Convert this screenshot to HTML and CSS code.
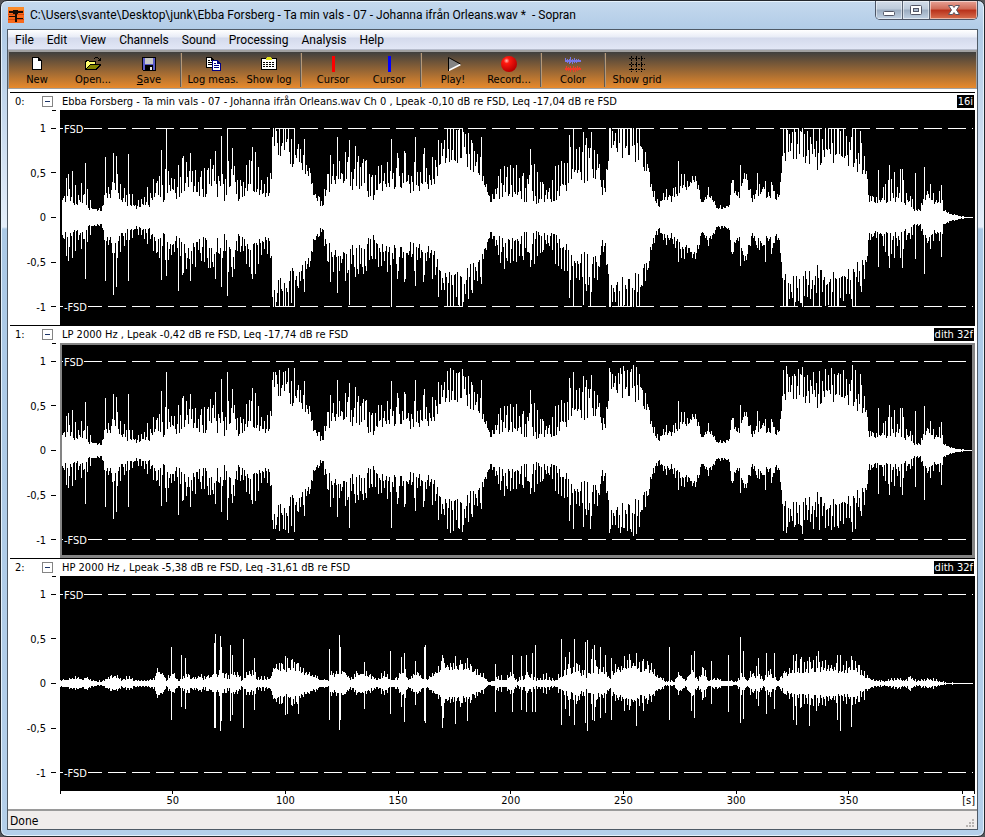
FILE: index.html
```html
<!DOCTYPE html>
<html lang="en">
<head>
  <meta charset="UTF-8">
  <meta name="viewport" content="width=device-width, initial-scale=1.0">
  <title>Sopran</title>
  <link rel="stylesheet" href="styles.css">
</head>
<body>
  <div class="window">
    <header class="titlebar">
      <svg class="app-icon" width="16" height="16" viewBox="0 0 16 16" shape-rendering="crispEdges">
        <rect width="16" height="16" fill="#f9691b"/>
        <rect width="16" height="3" fill="#fb8a28"/>
        <path d="M0 7.500h16M0 12.500h16" stroke="#d8480c"/>
        <path d="M1 4h14v2H1zM5 3h5v4H5zM7 3h2v12H7zM1 9h7v1H1zM9 11h6v1H9z" fill="#1b0d05"/>
      </svg>
      <h1 class="title">C:\Users\svante\Desktop\junk\Ebba Forsberg - Ta min vals - 07 - Johanna ifrån Orleans.wav *&nbsp; - Sopran</h1>
      <div class="window-controls">
        <button class="minimize" aria-label="Minimize">
          <svg width="12" height="14" viewBox="0 0 12 14"><rect x="0.5" y="8.5" width="11" height="4" rx="1" fill="#fff" stroke="#535666"/></svg>
        </button>
        <button class="maximize" aria-label="Maximize">
          <svg width="12" height="14" viewBox="0 0 12 14"><rect x="0.5" y="2.5" width="11" height="9" rx="1" fill="#fff" stroke="#535666"/><rect x="3.5" y="5.5" width="5" height="3" fill="#a9b9cd" stroke="#535666"/></svg>
        </button>
        <button class="close" aria-label="Close">
          <svg width="14" height="14" viewBox="0 0 14 14"><path d="M1.500 2.500h4L7 4.500l1.500-2h4L9.500 7l3 4.500h-4L7 9.500l-1.500 2h-4L4.500 7z" fill="#fff" stroke="#5a5560"/></svg>
        </button>
      </div>
    </header>

    <div class="client">
      <nav class="menu">
        <button>File</button>
        <button>Edit</button>
        <button>View</button>
        <button>Channels</button>
        <button>Sound</button>
        <button>Processing</button>
        <button>Analysis</button>
        <button>Help</button>
      </nav>

      <div class="toolbar">
        <button>
          <svg width="16" height="16" viewBox="0 0 16 16" shape-rendering="crispEdges"><path d="M3 1h7v1h1v1h1v1h1v10H3z" fill="#000"/><path d="M4 2h5v3h3v8H4z" fill="#fff"/></svg>
          New
        </button>
        <button>
          <svg width="16" height="16" viewBox="0 0 16 16" shape-rendering="crispEdges">
            <path d="M0 5h1V4h3v1h7v3h5v1l-5 5H0z" fill="#000"/>
            <path d="M1 6h1V5h2v1h6v2H5l-4 4z" fill="#ffff70"/>
            <path d="M5 9h9l-4 4H2z" fill="#848400"/>
            <path d="M9 2h1V1h3v1h1v1h1V2h1v3h-3V4h1V3h-1V2h-3v1H9z" fill="#000"/>
          </svg>
          Open...
        </button>
        <button>
          <svg width="16" height="16" viewBox="0 0 16 16" shape-rendering="crispEdges">
            <path d="M1 1h14v14H2l-1-1z" fill="#000"/>
            <path d="M2 2h2v6h8V2h2v12h-2V9H4v5H2z" fill="#5a5ac8"/>
            <path d="M4 2h8v6H4z" fill="#c6c6c6"/>
            <path d="M9 11h2v3H9z" fill="#e8e8e8"/>
          </svg>
          <span><u>S</u>ave</span>
        </button>
        <span class="separator"></span>
        <button>
          <svg width="16" height="16" viewBox="0 0 16 16" shape-rendering="crispEdges">
            <path d="M1 1h6v1h1v1h1v9H1z" fill="#000"/><path d="M2 2h4v3h2v6H2z" fill="#fff"/>
            <path d="M3 4.500h2M3 6.500h4M3 8.500h4" stroke="#000"/>
            <path d="M7 4h6v1h1v1h1v1h1v8H7z" fill="#000084"/><path d="M8 5h4v3h3v6H8z" fill="#fff"/>
            <path d="M9 7.500h2M9 9.500h5M9 11.500h5" stroke="#000084"/>
          </svg>
          Log meas.
        </button>
        <button>
          <svg width="16" height="16" viewBox="0 0 16 16" shape-rendering="crispEdges">
            <path d="M0 2h16v12H0z" fill="#000"/><path d="M1 3h14v10H1z" fill="#fff"/>
            <path d="M5 2h1V1h4v1h1v2H5z" fill="#e6e61e"/>
            <path d="M2 6.500h12M2 8.500h12M2 10.500h12" stroke="#000" stroke-dasharray="2 1"/>
          </svg>
          Show log
        </button>
        <span class="separator"></span>
        <button>
          <svg width="16" height="16" viewBox="0 0 16 16" shape-rendering="crispEdges"><path d="M7 0h3v16H7z" fill="#f00"/></svg>
          Cursor
        </button>
        <button>
          <svg width="16" height="16" viewBox="0 0 16 16" shape-rendering="crispEdges"><path d="M7 0h3v16H7z" fill="#00f"/></svg>
          Cursor
        </button>
        <span class="separator"></span>
        <button>
          <svg width="16" height="16" viewBox="0 0 16 16"><path d="M3.500 1.500v13l12-6z" fill="#848484"/><path d="M3.500 14.500l12-6" stroke="#fff" stroke-width="1.500"/><path d="M3.500 15V1.500l12 6.500" fill="none" stroke="#000"/></svg>
          Play!
        </button>
        <button>
          <svg width="16" height="16" viewBox="0 0 16 16">
            <defs><radialGradient id="recordBall" cx="0.35" cy="0.3" r="0.7"><stop offset="0" stop-color="#ffc0b8"/><stop offset="0.25" stop-color="#ff1a10"/><stop offset="1" stop-color="#b80000"/></radialGradient></defs>
            <circle cx="8" cy="8" r="8" fill="url(#recordBall)"/>
          </svg>
          Record...
        </button>
        <span class="separator"></span>
        <button>
          <svg width="16" height="16" viewBox="0 0 16 16" shape-rendering="crispEdges">
            <path d="M0 4h16v2H0zM0 2h1v4H0zM2 3h1v4H2zM4 3h1v5H4zM5 1h1v6H5zM7 3h1v5H7zM9 2h1v5H9zM11 3h1v4h-1zM13 3h1v3h-1z" fill="#7878e8"/>
            <path d="M0 12h16v2H0zM1 10h1v5H1zM3 11h1v4H3zM5 10h1v6H5zM8 10h1v6H8zM10 11h1v5h-1zM12 10h1v5h-1zM14 11h1v3h-1z" fill="#f03c28"/>
          </svg>
          Color
        </button>
        <span class="separator"></span>
        <button>
          <svg width="16" height="16" viewBox="0 0 16 16" shape-rendering="crispEdges"><path d="M0 2.500h16M0 8.500h16M0 13.500h16M2.500 0v16M7.500 0v16M12.500 0v16" stroke="#000" stroke-dasharray="2 1"/></svg>
          Show grid
        </button>
      </div>

      <main class="channels">
        <!-- Channels will be injected here by JavaScript -->
      </main>

      <div class="x-axis">
        <span class="tick"></span>
        <span class="tick">50</span>
        <span class="tick">100</span>
        <span class="tick">150</span>
        <span class="tick">200</span>
        <span class="tick">250</span>
        <span class="tick">300</span>
        <span class="tick">350</span>
        <span class="unit">[s]</span>
      </div>

      <footer class="statusbar">
        <span>Done</span>
        <svg class="grip" width="10" height="10" viewBox="0 0 10 10" shape-rendering="crispEdges"><path d="M7 0h2v2H7zM4 3h2v2H4zM7 3h2v2H7zM1 6h2v2H1zM4 6h2v2H4zM7 6h2v2H7z" fill="#b8b4b2"/></svg>
      </footer>
    </div>
  </div>

  <script src="script.js"></script>
</body>
</html>
```
FILE: styles.css
```css
* {
  box-sizing: border-box;
}

body {
  margin: 0;
  background-color: #55565a;
  font-family: "DejaVu Sans Condensed", Tahoma, sans-serif;
  font-size: 11px;
  line-height: 14px;
  color: #000;
}

button {
  padding: 0;
  border: none;
  background: none;
  font: inherit;
  color: inherit;
}

/* Glass window frame */
.window {
  display: flex;
  flex-direction: column;
  min-height: 100vh;
  padding: 0 6px 6px;
  border: 1px solid #23272d;
  border-radius: 7px;
  background: linear-gradient(to bottom, #c5d9ee 0, #b0cbe6 30px, #c8daee 120px, #e4eefa 226px, #abc9e6 228px, #b4cfea 100%);
  box-shadow: inset 0 0 0 1px #e6f2fc;
}

.titlebar {
  display: flex;
  align-items: flex-start;
  height: 28px;
}

.app-icon {
  flex: none;
  margin: 6px 6px 0 1px;
}

.title {
  flex: 1;
  margin: 5px 0 0;
  font-family: Roboto, sans-serif;
  font-size: 12px;
  font-weight: normal;
  line-height: 18px;
  white-space: nowrap;
}

.window-controls {
  display: flex;
  height: 19px;
  border: 1px solid #4c5566;
  border-top: none;
  border-radius: 0 0 5px 5px;
  overflow: hidden;
}

.window-controls button {
  display: flex;
  align-items: center;
  justify-content: center;
  width: 27px;
  border-right: 1px solid #5a6474;
  background: linear-gradient(to bottom, #d3dde9 0, #bccada 45%, #9aabbf 50%, #c2d2e4 100%);
  box-shadow: inset 0 0 0 1px rgba(255, 255, 255, 0.5);
}

.window-controls .close {
  width: 47px;
  border-right: none;
  background: linear-gradient(to bottom, #e7a296 0, #cf6a56 45%, #b8301a 50%, #d87050 100%);
}

.client {
  display: flex;
  flex: 1;
  flex-direction: column;
  border: 1px solid #4f5a66;
  background-color: #fff;
}

.menu {
  display: flex;
  height: 20px;
  border-bottom: 1px solid #b6bccc;
  background: linear-gradient(to bottom, #fff 0, #e8ecf6 7px, #d4daec 8px, #e2e7f6 100%);
  font-family: Roboto, sans-serif;
  font-size: 12px;
}

.menu button {
  padding: 0 6px 0 7px;
}

.toolbar {
  display: flex;
  height: 39px;
  border: 1px solid #a0a0a0;
  border-top-width: 2px;
  background: linear-gradient(to bottom, #3f3f3e, #e88a2c);
}

.toolbar button {
  display: flex;
  flex-direction: column;
  align-items: center;
  gap: 1px;
  width: 56px;
  padding-top: 4px;
  white-space: nowrap;
}

.toolbar svg {
  flex: none;
}

.separator {
  width: 8px;
  margin: 1px 0;
  background: linear-gradient(to right, #605850 1px, #b49878 1px) no-repeat center / 2px 100%;
}

.channels {
  display: flex;
  flex: 1;
  flex-direction: column;
  margin: 3px 2px 0;
}

.channel {
  display: grid;
  flex: 1;
  grid-template-columns: 50px 1fr;
  grid-template-rows: 17px 1fr;
  border-top: 1px solid #000;
}

.channel-number {
  display: flex;
  align-items: center;
  justify-content: space-between;
  padding: 0 7px 0 5px;
}

/* Plus/minus box that folds a channel */
.fold {
  width: 11px;
  height: 11px;
  border: 1px solid #848484;
  background: linear-gradient(#1c3468, #1c3468) no-repeat center / 5px 1px;
}

.channel-title {
  display: flex;
  align-items: center;
  justify-content: space-between;
  padding: 0 1px 0 2px;
  white-space: nowrap;
}

.channel-title h2 {
  margin: 0;
  padding-top: 1px;
  font-size: 11px;
  font-weight: normal;
}

.format {
  padding: 0 1px;
  background-color: #000;
  color: #fff;
  line-height: 13px;
}

.y-axis {
  display: grid;
  grid-template-rows: repeat(5, 1fr);
  align-items: center;
  margin: -4px 4px -4px 0;
  background: linear-gradient(#000, #000) no-repeat right top 4px / 4px 1px;
}

.y-axis span {
  padding: 2px 10px 0 0;
  background: linear-gradient(#000, #000) no-repeat right / 5px 1px;
  text-align: right;
}

.plot {
  position: relative;
  background-color: #000;
  color: #fff;
}

.plot svg {
  position: absolute;
  width: 100%;
  height: 100%;
}

.full-scale {
  position: absolute;
  left: 3px;
  padding: 0 1px;
  background-color: #000;
  line-height: 13px;
}

.full-scale.upper {
  top: 6%;
}

.full-scale.lower {
  bottom: 5%;
}

/* Frame round the active channel */
.channel.active .plot::after {
  content: "";
  position: absolute;
  inset: 0;
  border: 2px solid #848484;
  border-width: 2px 3px 3px 2px;
}

.x-axis {
  display: flex;
  height: 18px;
  margin: 0 2px 0 52px;
}

.tick {
  flex: 50;
  padding-top: 3px;
  background: linear-gradient(#000, #000) no-repeat top / 1px 3px;
  text-align: center;
}

.tick:first-child {
  flex: 25;
  background-position: left top;
}

.unit {
  flex: 31;
  padding-top: 3px;
  background: linear-gradient(to right, #000 1px, transparent 1px, transparent 12px, #000 12px) no-repeat right top / 13px 3px;
  text-align: right;
}

.statusbar {
  display: flex;
  align-items: center;
  justify-content: space-between;
  height: 20px;
  padding: 1px 2px 0;
  border-top: 2px solid #9a9a9a;
  background-color: #f0edec;
  font-size: 12px;
}

.grip {
  align-self: flex-end;
}
```
FILE: script.js
```js
const WIDTH = 915;
const HEIGHT = 215;
const UNIT = 89; // pixels from zero to full scale

// Envelope points: x, valley level, peak level (percent of full scale)
const songEnvelope = [
  [2, 10, 38], [8, 11, 55], [22, 11, 50], [25, 12, 48], [28, 7, 26], [33, 6, 15], [42, 6, 16], [44, 18, 45],
  [58, 22, 50], [61, 10, 34], [72, 9, 36], [75, 8, 18], [80, 9, 26], [90, 10, 38], [97, 22, 58],
  [104, 12, 50], [108, 30, 68], [116, 16, 52], [121, 24, 68], [128, 26, 70], [140, 20, 56],
  [150, 22, 70], [164, 18, 60], [172, 34, 82], [178, 18, 64], [190, 28, 72], [198, 22, 74],
  [206, 18, 44], [210, 22, 58], [212, 60, 95], [214, 64, 125], [232, 56, 128], [238, 54, 90],
  [250, 42, 62], [253, 22, 36], [261, 8, 18], [265, 18, 54], [275, 32, 68], [290, 30, 76],
  [300, 28, 70], [312, 18, 58], [325, 24, 76], [340, 26, 78], [350, 26, 70], [362, 22, 72],
  [374, 36, 78], [381, 60, 118], [404, 58, 128], [410, 48, 90], [420, 46, 76], [424, 32, 54],
  [430, 14, 22], [434, 18, 34], [440, 20, 64], [450, 20, 70], [465, 14, 56], [475, 14, 62],
  [490, 14, 54], [500, 22, 66], [506, 24, 78], [512, 42, 84], [524, 34, 82], [532, 44, 110],
  [538, 40, 82], [542, 20, 40], [546, 30, 60], [549, 68, 126], [580, 60, 128], [586, 48, 64], [594, 16, 30],
  [599, 11, 20], [606, 20, 40], [612, 14, 30], [620, 28, 56], [636, 34, 46], [642, 13, 18], [648, 24, 36],
  [656, 9, 13], [666, 8, 14], [669, 11, 15], [671, 34, 48], [678, 16, 28], [684, 42, 56],
  [692, 14, 28], [700, 24, 46], [706, 16, 36], [712, 22, 42], [717, 16, 28], [720, 28, 50],
  [722, 64, 124], [740, 60, 135], [758, 50, 130], [770, 58, 132], [780, 52, 136], [792, 52, 128],
  [798, 44, 96], [806, 42, 68], [809, 15, 26], [820, 13, 26], [828, 14, 48], [840, 16, 54],
  [847, 9, 40], [854, 6, 14], [860, 6, 12], [864, 12, 50], [870, 18, 44], [875, 12, 26],
  [881, 15, 34], [883, 7, 9], [890, 3, 4], [898, 1, 2], [904, 0, 1], [913, 0, 0]
];

// Single spikes: x, up, down (percent of full scale)
const songSpikes = [
  [25, 61, 68], [45, 67, 71], [53, 72, 87], [56, 68, 78], [68, 71, 71], [101, 75, 70], [106, 100, 65],
  [118, 58, 82], [130, 72, 71], [155, 74, 68], [161, 91, 78], [167, 100, 88], [172, 78, 66],
  [192, 79, 68], [213, 100, 100], [216, 97, 94], [231, 88, 96], [244, 88, 83], [270, 70, 72],
  [277, 90, 84], [289, 86, 98], [295, 80, 66], [331, 88, 100], [338, 66, 60], [355, 90, 76],
  [364, 78, 64], [421, 90, 74], [470, 76, 55], [509, 92, 90], [513, 100, 100], [523, 95, 98],
  [530, 78, 100], [618, 63, 50], [680, 58, 54], [697, 50, 34], [705, 40, 50], [768, 100, 98],
  [800, 97, 76], [818, 53, 55], [829, 58, 56], [842, 54, 56], [855, 50, 46], [864, 56, 63],
  [881, 36, 44]
];

const highEnvelope = [
  [0, 2, 4], [8, 3, 6], [16, 5, 9], [22, 3, 5], [26, 5, 10], [31, 2, 3], [43, 1, 3], [46, 4, 7],
  [55, 5, 12], [62, 2, 4], [69, 4, 10], [74, 2, 3], [87, 2, 4], [94, 3, 6], [97, 12, 18],
  [103, 8, 12], [106, 2, 4], [112, 8, 20], [118, 2, 5], [127, 6, 12], [132, 3, 6], [138, 5, 14],
  [145, 3, 8], [154, 6, 14], [163, 6, 16], [168, 3, 10], [175, 8, 18], [181, 2, 8], [189, 8, 20],
  [196, 3, 12], [204, 3, 8], [210, 4, 8], [213, 14, 22], [221, 14, 24], [227, 8, 18], [230, 14, 30],
  [240, 10, 20], [252, 6, 14], [258, 3, 6], [268, 2, 4], [270, 6, 14], [284, 10, 18], [290, 3, 6],
  [298, 7, 17], [308, 6, 14], [317, 2, 5], [323, 5, 15], [334, 2, 4], [345, 8, 24], [348, 2, 5],
  [357, 8, 16], [364, 2, 4], [372, 6, 12], [382, 14, 28], [402, 13, 28], [416, 8, 18], [422, 6, 14],
  [428, 1, 2], [434, 2, 3], [436, 4, 16], [444, 2, 5], [452, 6, 16], [457, 1, 3], [464, 3, 20],
  [473, 2, 8], [486, 3, 12], [494, 2, 4], [502, 4, 17], [506, 6, 22], [518, 10, 22], [526, 4, 12],
  [534, 12, 36], [545, 6, 18], [549, 3, 8], [555, 10, 26], [566, 14, 34], [578, 12, 30],
  [590, 9, 24], [600, 4, 8], [606, 1, 3], [614, 1, 3], [618, 8, 16], [625, 2, 4], [632, 9, 22],
  [638, 2, 4], [643, 8, 24], [648, 2, 3], [657, 3, 8], [662, 2, 3], [676, 1, 3], [682, 6, 16],
  [687, 2, 4], [692, 4, 26], [698, 6, 18], [703, 2, 4], [710, 6, 20], [717, 2, 3], [722, 4, 12],
  [730, 10, 22], [742, 10, 30], [762, 12, 32], [776, 10, 26], [790, 10, 32],
  [800, 7, 20], [806, 5, 10], [814, 2, 4], [824, 1, 3], [838, 3, 8], [843, 2, 5], [851, 3, 9],
  [856, 1, 3], [870, 3, 6], [880, 1, 4], [885, 0, 1], [913, 0, 0]
];

const highSpikes = [
  [111, 41, 40], [121, 31, 26], [125, 28, 28], [154, 45, 50], [155, 55, 50], [160, 53, 53],
  [161, 40, 42], [170, 43, 42], [172, 32, 35], [183, 50, 50], [194, 28, 29], [225, 30, 35],
  [227, 28, 34], [238, 22, 34], [269, 38, 40], [279, 54, 52], [280, 40, 41], [304, 24, 28],
  [330, 36, 34], [341, 29, 26], [344, 34, 43], [355, 25, 24], [364, 41, 42], [365, 43, 44],
  [382, 31, 50], [383, 28, 38], [395, 30, 45], [407, 28, 42], [435, 21, 31], [452, 31, 31],
  [461, 30, 29], [466, 31, 32], [472, 34, 31], [475, 43, 31], [501, 50, 46], [505, 29, 28],
  [509, 35, 36], [514, 49, 46], [525, 46, 44], [527, 48, 53], [532, 38, 40], [534, 43, 42],
  [540, 40, 38], [545, 32, 33], [551, 28, 40], [564, 30, 30], [576, 34, 47], [583, 27, 30],
  [609, 40, 40], [631, 31, 30], [634, 36, 38], [651, 25, 23], [668, 32, 32], [680, 52, 44],
  [683, 36, 39], [698, 28, 25], [706, 34, 34], [714, 34, 28], [733, 32, 41], [736, 33, 46],
  [749, 29, 47], [758, 36, 25], [777, 32, 40], [780, 32, 53], [791, 30, 48], [804, 14, 18]
];

const channels = [
  {
    title: 'Ebba Forsberg - Ta min vals - 07 - Johanna ifrån Orleans.wav Ch 0 , Lpeak -0,10 dB re FSD, Leq -17,04 dB re FSD',
    format: '16i', envelope: songEnvelope, spikes: songSpikes, gain: 1, limit: 1
  },
  {
    title: 'LP 2000 Hz , Lpeak -0,42 dB re FSD, Leq -17,74 dB re FSD',
    format: 'dith 32f', envelope: songEnvelope, spikes: songSpikes, gain: 0.88, limit: 0.96, active: true
  },
  {
    title: 'HP 2000 Hz , Lpeak -5,38 dB re FSD, Leq -31,61 dB re FSD',
    format: 'dith 32f', envelope: highEnvelope, spikes: highSpikes, gain: 1, limit: 1
  }
];

// Small repeatable random generator, so the curves look the same on every load
function createRandom(seed) {
  return function () {
    seed = (seed * 1664525 + 1013904223) % 4294967296;
    return seed / 4294967296;
  };
}

function wavePath(channel) {
  const random = createRandom(7);
  const points = channel.envelope;
  const middle = HEIGHT / 2;
  let path = '';
  let k = 0;

  for (let x = points[0][0]; x < 913; x++) {
    while (k < points.length - 2 && x >= points[k + 1][0]) {
      k++;
    }
    const [x0, low0, high0] = points[k];
    const [x1, low1, high1] = points[k + 1];
    const t = (x - x0) / (x1 - x0);
    const low = low0 + (low1 - low0) * t;
    const high = high0 + (high1 - high0) * t;
    const isPeak = x % 3 === 0 || random() < 0.12;
    const level = isPeak ? 0.35 + 0.65 * random() : 0.36 * random();
    let up = low + (high - low) * level;
    let down = low + (high - low) * level * (0.75 + 0.3 * random());

    const spike = channel.spikes.find(s => s[0] === x);
    if (spike) {
      up = spike[1];
      down = spike[2];
    }
    // the filtered channel does not clip flat, its tops vary a little
    const limit = channel.limit - (1 - channel.limit) * 3 * random();
    up = Math.min(up / 100 * channel.gain, limit) * UNIT;
    down = Math.min(down / 100 * channel.gain, limit) * UNIT;
    path += `M${x} ${Math.floor(middle - up)}h1V${Math.ceil(middle + down)}h-1z`;
  }
  return path;
}

document.querySelector('.channels').innerHTML = channels.map((channel, i) => `
  <section class="channel ${channel.active ? 'active' : ''}">
    <div class="channel-number">${i}: <button class="fold" aria-label="Fold channel ${i}"></button></div>
    <div class="channel-title"><h2>${channel.title}</h2> <span class="format">${channel.format}</span></div>
    <div class="y-axis"><span>1</span><span>0,5</span><span>0</span><span>-0,5</span><span>-1</span></div>
    <div class="plot">
      <svg viewBox="0 0 ${WIDTH} ${HEIGHT}" preserveAspectRatio="none" shape-rendering="crispEdges">
        <path d="M0 18.5H913M0 196.5H913" stroke="#fff" stroke-dasharray="18 6"/>
        <path d="${wavePath(channel)}" fill="#fff"/>
      </svg>
      <span class="full-scale upper">FSD</span>
      <span class="full-scale lower">-FSD</span>
    </div>
  </section>
`).join('');
```
